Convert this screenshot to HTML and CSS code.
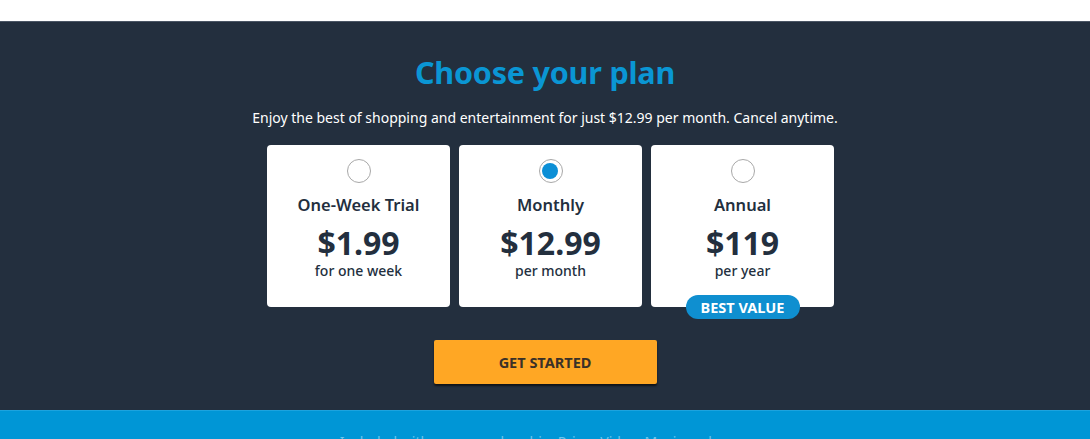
FILE: index.html
```html
<!DOCTYPE html>
<html lang="en">
<head>
<meta charset="utf-8">
<title>Choose your plan</title>
<link rel="stylesheet" href="styles.css">
</head>
<body>
<header class="topbar"></header>
<section class="plans">
  <h1 class="title">Choose your plan</h1>
  <p class="subtitle">Enjoy the best of shopping and entertainment for just $12.99 per month. Cancel anytime.</p>
  <div class="cards">
    <label class="card">
      <span class="radio"></span>
      <span class="name">One-Week Trial</span>
      <span class="price">$1.99</span>
      <span class="period">for one week</span>
    </label>
    <label class="card">
      <span class="radio radio-on"></span>
      <span class="name">Monthly</span>
      <span class="price">$12.99</span>
      <span class="period">per month</span>
    </label>
    <label class="card">
      <span class="radio"></span>
      <span class="name">Annual</span>
      <span class="price">$119</span>
      <span class="period">per year</span>
      <span class="badge">BEST VALUE</span>
    </label>
  </div>
  <button class="cta" type="button">GET STARTED</button>
</section>
<section class="info">
  <p class="info-text">Included with your membership: Prime Video, Music and more</p>
</section>
</body>
</html>
```
FILE: styles.css
```css
* { box-sizing: border-box; }
html, body { margin: 0; padding: 0; }
body {
  font-family: "Noto Sans", "Open Sans", Arial, sans-serif;
  background: #ffffff;
  overflow: hidden;
  height: 439px;
}
.topbar {
  height: 21px;
  background: #ffffff;
}
.plans {
  background: #232f3e;
  border-top: 1px solid #4a5564;
  height: 389px;
  display: flex;
  flex-direction: column;
  align-items: center;
  padding-top: 30px;
}
.title {
  margin: 0;
  font-size: 30.5px;
  line-height: 40px;
  font-weight: 700;
  color: #0a96d4;
  letter-spacing: -0.2px;
}
.subtitle {
  margin: 16px 0 0;
  font-size: 14px;
  line-height: 20px;
  color: #ffffff;
}
.cards {
  margin-top: 17px;
  margin-left: 11px;
  display: flex;
  gap: 9px;
}
.card {
  position: relative;
  width: 183px;
  height: 162px;
  background: #ffffff;
  border-radius: 4px;
  display: flex;
  flex-direction: column;
  align-items: center;
  padding-top: 14px;
  color: #232f3e;
}
.radio {
  width: 24px;
  height: 24px;
  border-radius: 50%;
  border: 1.5px solid #a8a8a8;
  background: #ffffff;
  position: relative;
}
.radio-on::after {
  content: "";
  position: absolute;
  left: 2.5px;
  top: 2.5px;
  width: 16px;
  height: 16px;
  border-radius: 50%;
  background: #0c8fd6;
}
.name {
  margin-top: 11px;
  font-size: 16.5px;
  line-height: 22px;
  font-weight: 600;
}
.price {
  margin-top: 9px;
  font-size: 32px;
  line-height: 36px;
  font-weight: 700;
}
.period {
  margin-top: 1px;
  font-size: 14px;
  line-height: 18px;
  font-weight: 500;
}
.badge {
  position: absolute;
  left: 50%;
  bottom: -12px;
  transform: translateX(-50%);
  width: 114px;
  height: 24px;
  border-radius: 12px;
  background: #0f8fd0;
  color: #ffffff;
  font-size: 14.5px;
  font-weight: 700;
  line-height: 24px;
  text-align: center;
}
.cta {
  margin-top: 33px;
  width: 223px;
  height: 44px;
  border: none;
  border-radius: 2px;
  background: #ffa724;
  box-shadow: 0 2px 2px rgba(0, 0, 0, 0.6);
  font-family: inherit;
  font-size: 14.5px;
  font-weight: 700;
  color: #3a3128;
  cursor: pointer;
}
.info {
  background: #0096d6;
  height: 29px;
  border-top: 1px solid #1ca3de;
  display: flex;
  justify-content: center;
}
.info-text {
  margin: 21px 0 0;
  font-size: 14px;
  line-height: 20px;
  color: #6cc5ec;
}
```
